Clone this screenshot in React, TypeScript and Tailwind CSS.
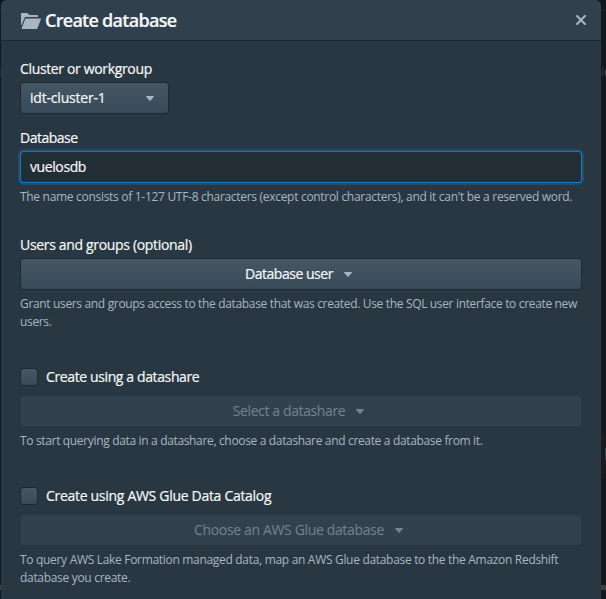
import React from "react";

const Caret = ({ className = "" }: { className?: string }) => (
  <svg viewBox="0 0 16 16" className={"size-4 shrink-0 " + className} fill="currentColor">
    <path d="M12 6.5c0-.28-.22-.5-.5-.5h-7a.495.495 0 00-.37.83l3.5 4c.09.1.22.17.37.17s.28-.07.37-.17l3.5-4c.08-.09.13-.2.13-.33z" />
  </svg>
);

const raised =
  "rounded-[3px] bg-gradient-to-b from-[#455664] to-[#394b59] shadow-[0_0_0_1px_rgba(16,22,26,0.4)]";

const crisp = "[-webkit-text-stroke:0.2px_currentColor] ";

const Label = ({ children, spacing }: { children: React.ReactNode; spacing: string }) => (
  <div className={"-ml-px h-[18px] whitespace-nowrap leading-[18px] " + crisp + spacing}>{children}</div>
);

const Help = ({ children, spacing }: { children: React.ReactNode; spacing: string }) => (
  <div className={"-ml-px mt-1.5 whitespace-nowrap text-xs leading-[18px] text-[#a7b6c2] " + spacing}>{children}</div>
);

const Check = ({ children, spacing }: { children: React.ReactNode; spacing: string }) => (
  <label className="flex h-4 items-center gap-[9px]">
    <span className={"size-4 " + raised} />
    <span className={"whitespace-nowrap leading-4 " + crisp + spacing}>{children}</span>
  </label>
);

const DisabledSelect = ({ children, spacing }: { children: React.ReactNode; spacing: string }) => (
  <button className="mt-[11px] flex h-[30px] w-full items-center justify-center gap-[7px] rounded-[3px] bg-[#31424e] pr-px text-[#74838f]">
    <span className={"whitespace-nowrap " + spacing}>{children}</span>
    <Caret />
  </button>
);

export default function App() {
  return (
    <div className="flex h-[599px] w-[606px] overflow-hidden bg-[#12191e] font-['Open_Sans','Noto_Sans',sans-serif] text-sm text-[#f5f8fa]">
      <div className="flex w-px shrink-0 flex-col">
        <span className="mt-[10px] h-px bg-[#2a3238]" />
        <span className="mt-[57px] h-[9px] bg-[#20272c]" />
        <span className="mt-[508px] h-[5px] bg-[#3c4043]" />
      </div>
      <div className="flex w-[600px] shrink-0 flex-col rounded-t-md bg-[#293742]">
        <header className="flex h-10 shrink-0 items-center rounded-t-md bg-[#30404d] pl-5 pr-[10px] shadow-[0_1px_0_rgba(16,22,26,0.4)]">
          <svg viewBox="0 0 20 20" className="mt-0.5 size-5 text-[#a7b6c2]" fill="currentColor">
            <path d="M3.3 7.4C3.6 6.6 4.2 6 5 6h12V5c0-.55-.45-1-1-1H8.41l-1.7-1.71A1 1 0 006 2H1c-.55 0-1 .45-1 1v12.3zM19.5 7.5H5c-.4 0-.7.25-.85.6L.7 17.2c-.12.4.1.8.5.8h14.3c.4 0 .7-.25.85-.6l3.6-9.2c.1-.4-.1-.7-.45-.7z" />
          </svg>
          <h1 className="ml-1 flex-1 whitespace-nowrap text-lg font-semibold leading-5 tracking-[-0.72px] [-webkit-text-stroke:0.2px_currentColor]">
            Create database
          </h1>
          <svg viewBox="0 0 20 20" className="size-5 text-[#a7b6c2]" fill="currentColor">
            <path d="M11.41 10l3.29-3.29c.19-.18.3-.43.3-.71a1.003 1.003 0 00-1.71-.71L10 8.59l-3.29-3.3a1.003 1.003 0 00-1.42 1.42L8.59 10 5.3 13.29c-.19.18-.3.43-.3.71a1.003 1.003 0 001.71.71l3.29-3.3 3.29 3.29c.18.19.43.3.71.3a1.003 1.003 0 00.71-1.71L11.41 10z" />
          </svg>
        </header>
        <main className="px-5 pt-5">
          <Label spacing="tracking-[-0.35px]">Cluster or workgroup</Label>
          <button className={"mt-[5px] flex h-[30px] w-[147px] items-center justify-between pl-[9px] pr-2.5 " + raised}>
            <span className={crisp + "tracking-[-0.2px]"}>idt-cluster-1</span>
            <Caret className="text-[#a7b6c2]" />
          </button>
          <div className="mt-4">
            <Label spacing="tracking-[-0.5px]">Database</Label>
            <input
              defaultValue="vuelosdb"
              className={
                "mt-[5px] block h-[30px] w-full rounded-[3px] bg-[#232d35] pb-px pl-[9px] tracking-[-0.4px] shadow-[0_0_0_1px_#137cbd,0_0_0_3px_rgba(19,124,189,0.3)] outline-none " +
                crisp
              }
            />
            <Help spacing="tracking-[-0.3px]">
              The name consists of 1-127 UTF-8 characters (except control characters), and it can't be a reserved word.
            </Help>
          </div>
          <div className="mt-[30px]">
            <Label spacing="tracking-[-0.33px]">Users and groups (optional)</Label>
            <button className={"mt-[5px] flex h-[30px] w-full items-center justify-center gap-[7px] pr-px " + raised}>
              <span className={crisp + "tracking-[-0.48px]"}>Database user</span>
              <Caret className="text-[#a7b6c2]" />
            </button>
            <Help spacing="tracking-[-0.34px]">
              Grant users and groups access to the database that was created. Use the SQL user interface to create new
              <br />
              users.
            </Help>
          </div>
          <div className="mt-[38px]">
            <Check spacing="tracking-[-0.38px]">Create using a datashare</Check>
            <DisabledSelect spacing="tracking-[-0.38px]">Select a datashare</DisabledSelect>
            <Help spacing="tracking-[-0.34px]">
              To start querying data in a datashare, choose a datashare and create a database from it.
            </Help>
          </div>
          <div className="mt-[38px]">
            <Check spacing="tracking-[-0.3px]">Create using AWS Glue Data Catalog</Check>
            <DisabledSelect spacing="tracking-[-0.35px]">Choose an AWS Glue database</DisabledSelect>
            <Help spacing="tracking-[-0.31px]">
              To query AWS Lake Formation managed data, map an AWS Glue database to the the Amazon Redshift
              <br />
              database you create.
            </Help>
          </div>
        </main>
      </div>
      <div className="flex w-[5px] shrink-0 flex-col">
        <span className="mt-[10px] h-px bg-[#1d252b]" />
        <span className="mt-[53px] h-4 overflow-hidden whitespace-nowrap text-xs leading-4 text-[#454b4f]">
          <span className="text-[#5c2f30]">i</span>c
        </span>
        <span className="mt-[354px] flex h-10 items-center justify-end bg-[#1c191f]">
          <span className="h-3 w-px bg-[#1f4a58]" />
        </span>
        <span className="mt-[111px] h-[5px] bg-[#3c4043]" />
      </div>
    </div>
  );
}
